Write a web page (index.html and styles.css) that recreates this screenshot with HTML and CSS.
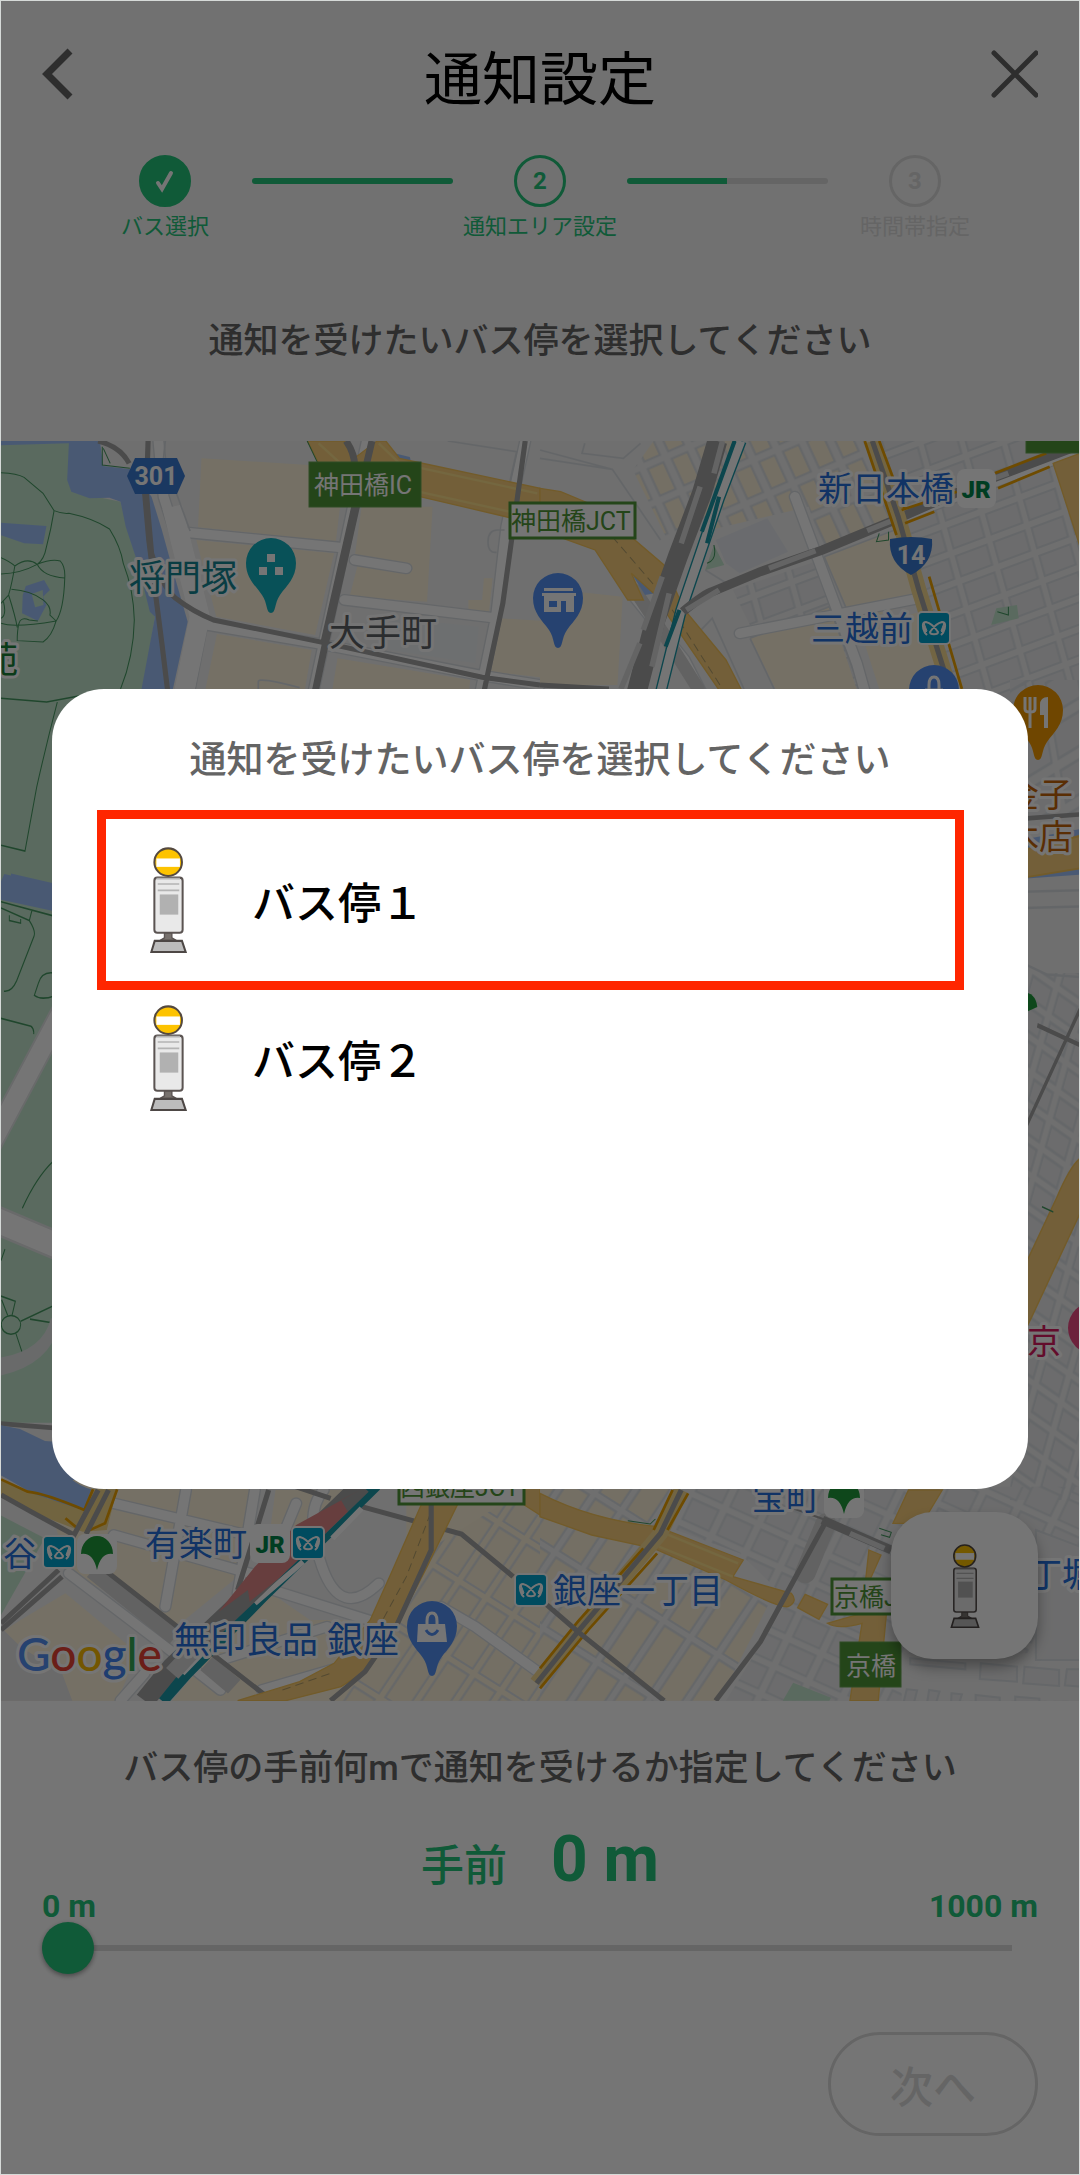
FILE: index.html
```html
<!DOCTYPE html>
<html lang="ja">
<head>
    <meta charset="utf-8">
    <meta name="viewport" content="width=device-width, initial-scale=1">
    <title>通知設定</title>
    <link rel="stylesheet" href="styles.css">
</head>
<body>
    <svg class="sprite">
        <symbol id="bus-stop" viewBox="61 56 110 315">
            <path d="M104 312h22v14l14 8H90l14-8z" fill="#77716d" stroke="#5b5452" stroke-width="4"/>
            <path d="M75 335h81l11 33H65z" fill="#bcbcbc" stroke="#4d4745" stroke-width="6"/>
            <rect x="74" y="147" width="84" height="164" rx="9" fill="#e9e9e9" stroke="#5b5452" stroke-width="6"/>
            <path d="M80 150h70M84 166h64M84 185h64" stroke="#b4b4b4" stroke-width="5"/>
            <path d="M90 197h55v60H90z" fill="#b1b1b1"/>
            <circle cx="115" cy="101" r="41" fill="#fdc300" stroke="#54493f" stroke-width="6"/>
            <path d="M80 90h70v25H80z" fill="#fff"/>
        </symbol>
        <symbol id="metro" viewBox="0 0 34 34">
            <rect x="1" y="1" width="32" height="32" rx="4" fill="#00a3cf" stroke="#fff" stroke-width="2"/>
            <path d="M10 24L8 22C5 16 5 11 9 11C14 12 17 15 21 21C21 24 13 24 13 21C17 15 20 12 25 11C29 11 29 16 26 22L24 24" fill="none" stroke="#fff" stroke-width="2"/>
            <path d="M7 12l3 8-2 2zM27 12l-3 8 2 2z" fill="#fff" stroke="#fff"/>
        </symbol>
        <symbol id="toei" viewBox="0 0 40 40">
            <rect width="40" height="40" rx="8" fill="#fff"/>
            <path d="M4 20A16 18 0 0 1 36 20Q24 18 20 36Q16 18 4 20z" fill="#1f9c3c"/>
        </symbol>
        <symbol id="pin" viewBox="-28 -28 56 80">
            <path d="M0 50C-5 50-3 41-9 32C-16 22-25 15-25 0A25 25 0 1 1 25 0C25 15 16 22 9 32C3 41 5 50 0 50z"/>
        </symbol>
        <pattern id="blocks-nihonbashi" width="118" height="86" patternUnits="userSpaceOnUse" patternTransform="rotate(-21) skewX(-6)">
            <path class="block" d="M12 12h96v62H12z"/>
        </pattern>
        <pattern id="blocks-kanda" width="76" height="112" patternUnits="userSpaceOnUse" patternTransform="rotate(-24)">
            <path class="block sand" d="M10 10h50v88H10z"/>
        </pattern>
        <pattern id="blocks-yaesu" width="84" height="60" patternUnits="userSpaceOnUse" patternTransform="rotate(24)">
            <path class="block" d="M10 8h62v42H10z"/>
        </pattern>
        <pattern id="blocks-ginza" width="94" height="210" patternUnits="userSpaceOnUse" patternTransform="rotate(33)">
            <path class="block sand" d="M10 10h72v188H10z"/>
        </pattern>
        <pattern id="blocks-kyobashi" width="110" height="92" patternUnits="userSpaceOnUse" patternTransform="rotate(25)">
            <path class="block" d="M10 10h84v68H10z"/>
        </pattern>
    </svg>

    <div class="screen">
        <header class="top-bar">
            <button class="icon-btn" aria-label="戻る">
                <svg width="32" height="52" viewBox="0 0 32 52"><path d="M28 3L5 26l23 23" stroke-width="7"/></svg>
            </button>
            <h1>通知設定</h1>
            <button class="icon-btn" aria-label="閉じる">
                <svg width="48" height="52" viewBox="0 0 48 52"><path d="M4 5l42 42M46 5L4 47" stroke-width="5" stroke-linecap="round"/></svg>
            </button>
        </header>

        <ol class="steps">
            <li class="step done">
                <span class="num"><svg width="24" height="26" viewBox="0 0 24 26"><path d="M5 15l4 6L18 5" fill="none" stroke="#fff" stroke-width="4" stroke-linecap="round"/></svg></span>
                <span class="label">バス選択</span>
            </li>
            <li class="bar full"></li>
            <li class="step current">
                <span class="num">2</span>
                <span class="label">通知エリア設定</span>
            </li>
            <li class="bar half"></li>
            <li class="step">
                <span class="num">3</span>
                <span class="label">時間帯指定</span>
            </li>
        </ol>

        <p class="lead">通知を受けたいバス停を選択してください</p>

        <div class="map">
            <svg class="map-canvas" viewBox="0 441 1080 1260" preserveAspectRatio="xMidYMid slice">
                <rect y="441" width="1080" height="1260" fill="#f1f1f1"/>

                <!-- Otemachi and the palace moat -->
                <g transform="translate(0 430) scale(.3444 .3333)">
                    <path class="park" d="M0 33H200L210 185 350 215 440 545 450 560 410 810H0z"/>
                    <path class="water" d="M0 33H290L300 108 380 118 440 200 470 300 510 450 545 575 495 810H405L450 560 435 545 400 400 365 290 350 215 318 203 260 205 207 185 195 150 200 40 0 46z"/>
                    <path class="water" d="M3 278L135 288 125 343 70 340 3 316zM75 468L128 450 145 480 125 500 135 525 110 573 64 550 66 495z"/>
                    <path class="park" d="M92 492l32-12 2 45-24 7z"/>
                    <path class="trail" d="M3 128Q50 130 70 142L125 190 157 242Q148 300 135 350 128 390 108 403M157 242Q180 252 200 250 270 265 318 297 350 350 358 400 388 480 390 570 388 680 350 777M3 383Q30 395 43 408M43 408Q80 380 108 403 125 440 188 444M108 403Q150 385 175 393 190 410 188 444 185 540 163 573 150 620 125 636L50 632Q50 600 55 580 60 560 85 570L110 573M3 432Q60 430 108 403M43 408Q35 460 25 495L3 520M33 478Q90 482 125 510 150 530 145 555L163 573M25 495Q45 560 50 592M3 580Q40 595 163 573M10 515q10 40-7 50"/>
                    <path class="sand" d="M585 85L895 105 1000 120 975 335 575 292zM570 330L970 370 915 615 628 560zM1050 230H1256L1240 515 1015 500 1040 400 1030 380zM630 612L905 660 880 810H590zM980 685L1365 750 1360 810H960zM1450 565L1568 572V742L1425 725zM1405 445h25l-10 100h-60v-35h40z"/>
                    <path d="M1110 560l280 30-10 110-250-40z" fill="#eef1f4"/>
                    <path class="casing" d="M460 33L475 200 590 570 545 810M550 308L985 352M600 585L920 640 1390 735 1568 765M1065 33L1000 350 940 640 905 810M1525 33L1470 290 1440 560 1390 810M1030 390L1180 415M1000 510L1430 563"/>
                    <path class="road" d="M460 33L475 200 590 570 545 810M550 308L985 352M600 585L920 640 1390 735 1568 765M1065 33L1000 350 940 640 905 810M1525 33L1470 290 1440 560 1390 810M1030 390L1180 415M1000 510L1430 563"/>
                    <path d="M500 230L580 560 530 810" fill="none" stroke="#fff" stroke-width="58" stroke-linejoin="round"/>
                    <path class="edge" d="M1300 33L1500 65 1460 250M1465 300h-20q-28 0-28 35t25 32M480 33l-5 50 77 220M750 810v-55q0-15 120 18"/>
                    <path class="water" d="M1130 66l60 15 8 35-45-10z"/>
                    <path class="highway" d="M893 33H1000L1035 80 1095 33H1120L1160 85 1250 105 1568 175V285L1460 258 1220 200 1100 130 930 110z"/>
                    <path class="highway-line" d="M925 40l90 85 200 60 353 80M1100 40l60 60 400 90"/>
                    <path class="subway" d="M430 33L425 190 440 370M420 190L432 330 455 520 470 640 490 810M440 370Q470 470 510 505 560 545 620 570L940 638 1400 742 1568 765M1525 33L1460 520 1400 810M285 33Q350 50 375 100"/>
                    <path class="subway wide" d="M1080 33L1035 230 945 640 910 810M1005 33Q1030 70 1030 110V230L940 640"/>
                    <path class="trail" d="M297 50v55l80 10M300 55l20 45M892 33l30 65"/>
                </g>

                <!-- Kanda to Mitsukoshimae -->
                <g transform="translate(540 430) scale(.3444 .3333)">
                    <path d="M330 33H960L1060 260 820 360 780 230 370 330 270 120z" fill="url(#blocks-kanda)"/>
                    <path d="M980 33H1568V810H1210L1060 270z" fill="url(#blocks-nihonbashi)"/>
                    <path d="M560 480L840 380 930 777H700z" fill="url(#blocks-nihonbashi)"/>
                    <path d="M510 330L660 265 720 365 580 430 540 400z" fill="#e6eaf0"/>
                    <path class="sand" d="M825 380L1030 300 1100 510 910 585zM610 625L840 530 930 810H700zM930 600L1120 540 1170 777 985 777zM60 480L240 500 225 765H0V490z"/>
                    <path class="edge" d="M0 85L210 118 350 330M210 118L0 60M130 40l-8 30 120 15 50-45M825 380L1030 300M610 625L840 530 930 777M610 625l70 152M825 380L910 585M480 420l70 45M430 640l70-75 100 230"/>
                    <path class="casing" d="M265 490L420 690 480 810M740 200L920 700 950 810M580 610L1100 505M1030 270L1568 60"/>
                    <path class="road" d="M265 490L420 690 480 810M740 200L920 700 950 810M580 610L1100 505M1030 270L1568 60"/>
                    <path d="M275 480L370 630 460 777" stroke="#d5d5d5" stroke-width="38" fill="none" stroke-linecap="round"/>
                    <path class="water" d="M265 430l70 60-30 5z"/>
                    <path class="highway" d="M0 175L60 185 160 228 360 405 420 540 540 690 600 810H540L380 570 330 490 265 430 300 510 255 510 160 360 0 300zM1490 100l78-30v280z"/>
                    <path class="lane" d="M210 320L360 500 470 680 530 777"/>
                    <path class="park" d="M505 345l30 60-55 15zM1325 535l60-10 5 40-80 20z"/>
                    <path class="trail" d="M505 345q10 45-20 55M985 310l-8 25 35-5V305M1328 545l32 10V530"/>
                    <path d="M583 33L520 205 410 540 345 810" fill="none" stroke="#1b98a8" stroke-width="34"/>
                    <path d="M583 33L520 205 410 540 345 810" fill="none" stroke="#fff" stroke-width="26"/>
                    <path d="M565 33L470 305M405 540L365 650M520 200L485 340" fill="none" stroke="#1b98a8" stroke-width="12"/>
                    <path d="M515 33L470 190 400 380 335 570 275 810" fill="none" stroke="#a3a3a3" stroke-width="58"/>
                    <path d="M530 33L505 130M465 170L410 340M355 440L300 600M375 490L325 710M290 640L235 777" fill="none" stroke="#d9dadb" stroke-width="16"/>
                    <path d="M415 545Q480 490 500 485L640 425 820 360 1030 270 1250 170 1568 45" fill="none" stroke="#a3a3a3" stroke-width="27"/>
                    <path d="M425 540L520 480M665 415L800 362M950 302L1040 265M1250 170l110-40" fill="none" stroke="#d9dadb" stroke-width="16"/>
                    <path class="toll" d="M965 33L1040 260 1100 480 1200 810"/>
                    <path class="toll-side" d="M943 33L1035 315M985 33L1060 240M1060 280L1145 245M1085 430L1165 700M1130 440L1225 777M1320 130L1470 70M1330 175L1480 110M1050 240L1210 185"/>
                    <path class="subway" d="M965 33L1040 260 1100 480 1200 810M0 765l200 12"/>
                </g>

                <!-- west side of the palace grounds -->
                <g transform="translate(0 680) scale(.3333 .523)">
                    <path class="park" d="M0 0H240V1420H0z"/>
                    <path class="water" d="M3 385l10-14 20 3V370L170 390V443L3 420z"/>
                    <path class="trail" d="M3 35L140 42 240 30M172 42Q140 120 110 205L75 327 3 316M3 424L160 451M3 436L88 460 96 440M28 450v10l34 5v-8M88 460q20 20 14 30L50 575q-15 22-38 20M160 560q-35-3-45 20L103 603q20 10 60 1M3 647l90 15q10 5 8 15M160 920Q110 950 67 1010M15 1088L3 1110M3 1178l43 10-10 27M5 1185l18 30M62 1226L165 1195M48 1250l29 56M90 1222l75 8"/>
                    <ellipse class="trail" cx="33" cy="1233" rx="29" ry="18"/>
                    <path d="M-20 880L180 640M-20 1030L180 1084M0 1325Q150 1310 180 1230" fill="none" stroke="#e4e6e8" stroke-width="58"/>
                    <path d="M-20 880L180 640M-20 1030L180 1084" fill="none" stroke="#fff" stroke-width="48"/>
                    <path d="M0 1330Q150 1310 180 1230L240 1400H0z" class="park"/>
                    <path d="M3 1422L160 1430" stroke="#a3a3a3" stroke-width="9"/>
                    <path class="water" d="M3 1425L60 1432 135 1455 240 1460V1568H130L3 1520z"/>
                </g>

                <!-- Yaesu -->
                <g transform="translate(960 680) scale(.3333 .523)">
                    <path d="M150 0H360V260H150z" fill="url(#blocks-nihonbashi)"/>
                    <path d="M190 560H360V1568H150z" fill="url(#blocks-yaesu)"/>
                    <path class="water" d="M190 305L360 285V372L190 380z"/>
                    <path class="highway" d="M190 325L360 298V360L190 378zM150 1180L290 990Q330 930 360 915V1020L215 1218 150 1300z"/>
                    <path class="edge" d="M190 405L360 402M190 436L360 433M200 545l60 18 100 5"/>
                    <path d="M190 265L360 257M232 660l128 38M150 920L360 630" fill="none" stroke="#a3a3a3" stroke-width="9"/>
                    <path class="trail" d="M246 1007l34 10"/>
                    <path d="M160 600q65-12 72 25L190 637z" fill="#1f9c3c"/>
                </g>

                <!-- Yurakucho and Ginza -->
                <g transform="translate(0 1460) scale(.3444 .3333)">
                    <path class="sand" d="M120 60H740L690 350 500 510 200 330zM800 90H1000L760 380 900 480H1180V60H1568V722H500L760 400zM60 480L190 400 400 580 340 722H0V520z"/>
                    <path d="M1150 330L1568 60V722H990z" fill="url(#blocks-ginza)"/>
                    <path d="M0 500L60 560 180 640 210 722H0z" fill="#e6e6e8"/>
                    <path class="park" d="M0 165L130 235 0 470z"/>
                    <path class="casing" d="M330 130L860 260M330 225L760 350M540 90L480 440M200 340L480 560 640 690M740 90L690 400M860 130L760 380 1100 490M760 690L1060 600M940 90Q880 160 935 320T1100 370M640 600L950 500M350 722L420 640M1568 640L1380 500 1280 440"/>
                    <path class="road" d="M330 130L860 260M330 225L760 350M540 90L480 440M200 340L480 560 640 690M740 90L690 400M860 130L760 380 1100 490M760 690L1060 600M940 90Q880 160 935 320T1100 370M640 600L950 500M350 722L420 640M1568 640L1380 500 1280 440"/>
                    <path class="water" d="M0 0H160Q200 70 265 88L245 150Q180 140 100 95L0 45z"/>
                    <path d="M0 60L80 95 245 152 270 88H340L310 210 240 215 100 160 0 105z" fill="#f6d98b"/>
                    <path class="toll-side" d="M3 58L80 95Q130 100 245 150L270 88M340 88L305 190 250 215M190 175l35 30"/>
                    <path class="subway" d="M3 105L90 155 215 225 285 90M250 222L315 90M3 490L170 330M3 510L180 350"/>
                    <path d="M270 330L510 530" stroke="#d5d5d5" stroke-width="55"/>
                    <path d="M600 610L680 680" stroke="#d5d5d5" stroke-width="55"/>
                    <path class="subway" d="M310 335L790 722M780 90L690 390M800 60L960 115M1050 140L1340 222 1490 350"/>
                    <path class="highway" d="M1225 130H1330L1240 320 1170 460 1060 635 990 680 830 722H690L870 665 970 610 1075 480 1140 330zM1440 80H1568V165z"/>
                    <path class="lane" d="M1250 160L1180 350 1090 520M820 690l140-50"/>
                    <path class="subway" d="M1252 130V270L1150 500 1060 635 960 722"/>
                    <path d="M1090 75L760 410 540 640 470 722" fill="none" stroke="#1b98a8" stroke-width="38"/>
                    <path d="M1050 145L965 235M880 305L740 430M610 555L530 640" fill="none" stroke="#fff" stroke-width="16"/>
                    <path d="M1050 75L720 405 500 620 420 722" fill="none" stroke="#a3a3a3" stroke-width="58"/>
                    <path d="M1045 90L860 195 740 320 635 455 720 390 725 425 810 355 1010 155 990 120z" fill="#e08787"/>
                    <path d="M590 540L500 640" stroke="#d9dadb" stroke-width="48"/>
                </g>

                <!-- Ginza-itchome and Kyobashi -->
                <g transform="translate(540 1460) scale(.3444 .3333)">
                    <path d="M0 80H380L320 230 0 640z" fill="url(#blocks-ginza)"/>
                    <path d="M120 520L320 240 680 400 520 722H0V660z" fill="url(#blocks-ginza)"/>
                    <path d="M420 80H1568V722H540L720 420 580 280 370 200z" fill="url(#blocks-kyobashi)"/>
                    <path d="M1050 580H1568V722H1050z" fill="#f1f1f1"/>
                    <path class="block" d="M1075 595l160 15v18l-160-15zM1280 610l105 10v45l-108-8zM1407 620l100 10v48l-104-8zM1530 628h38v52l-44-4zM1065 688l30 3-10 40h-30zM1130 690l30 5-12 40h-25zM1195 700l30 3-12 40h-20zM1265 705l70 8v20h-70zM1380 710l70 6v20h-70z"/>
                    <path d="M1440 210L1568 260V600H1440z" class="block"/>
                    <path class="highway" d="M0 100Q150 180 340 200L590 300 560 350 730 400Q750 425 720 440 690 445 540 360L330 265 150 225 0 170zM1070 90H1168L1110 190H1025zM955 270l35 15-30 70 5 60h45L982 722H900L935 490q-70 20-100 0l100-30zM770 403l65 30-25 45-62-35z"/>
                    <path class="highway-line" d="M350 215L575 310M345 260L560 350"/>
                    <path class="park" d="M735 668l110 45-5 9H705z"/>
                    <path class="trail" d="M255 182l65 10 15-15M985 205l35 12-5 15-25-8"/>
                    <path d="M770 340L830 190" stroke="#d5d5d5" stroke-width="60" stroke-linecap="round"/>
                    <path class="toll" d="M410 90L350 220 110 515-10 670"/>
                    <path class="toll-side" d="M385 90L330 210M430 100L370 210M300 265L110 485 0 625M340 280L140 510 0 685"/>
                    <path class="subway" d="M410 90L350 220 110 515-10 670M20 435L110 515 360 722M830 185L690 450 640 545 510 722"/>
                    <path d="M820 180L1020 270" stroke="#a3a3a3" stroke-width="26"/>
                    <path d="M900 220L1000 265" stroke="#d9dadb" stroke-width="16"/>
                    <path d="M720 140L830 180" stroke="#a3a3a3" stroke-width="6"/>
                </g>

                <!-- road signs -->
                <path d="M127 476l8-18h42l8 18-8 18h-42z" fill="#3a7ad3"/>
                <text class="route" x="156" y="485">301</text>
                <path d="M890 539q21-4 42 0 2 24-21 36-23-12-21-36z" fill="#3a7ad3"/>
                <text class="route" x="911" y="564">14</text>
                <rect class="exit" x="309" y="462" width="112" height="45"/>
                <text class="sign" x="314" y="494">神田橋IC</text>
                <rect class="junction" x="510" y="503" width="125" height="35"/>
                <text class="sign green" x="511" y="530">神田橋JCT</text>
                <rect class="junction" x="399" y="1468" width="125" height="36"/>
                <text class="sign green" x="400" y="1496">西銀座JCT</text>
                <rect class="junction" x="832" y="1579" width="125" height="35"/>
                <text class="sign green" x="834" y="1606">京橋JCT</text>
                <rect class="exit" x="840" y="1642" width="61" height="45"/>
                <text class="sign" x="846" y="1675">京橋</text>
                <rect class="exit" x="1026" y="430" width="60" height="23"/>

                <!-- stations -->
                <text class="place blue" x="818" y="501">新日本橋</text>
                <text class="place blue" x="811" y="641">三越前</text>
                <text class="place blue" x="145" y="1556">有楽町</text>
                <text class="place blue" x="3" y="1566">谷</text>
                <text class="place blue" x="553" y="1603">銀座一丁目</text>
                <text class="place blue" x="752" y="1510">宝町</text>
                <text class="place blue" x="994" y="1587">八丁堀</text>
                <rect x="957" y="469" width="39" height="39" rx="8" fill="#fff"/>
                <text class="jr" x="976" y="498">JR</text>
                <rect x="250" y="1524" width="40" height="39" rx="8" fill="#fff"/>
                <text class="jr" x="270" y="1553">JR</text>
                <use href="#metro" x="917" y="611" width="34" height="34"/>
                <use href="#metro" x="42" y="1535" width="34" height="34"/>
                <use href="#metro" x="291" y="1526" width="34" height="34"/>
                <use href="#metro" x="514" y="1573" width="34" height="34"/>
                <use href="#toei" x="77" y="1534" width="40" height="40"/>
                <use href="#toei" x="824" y="1478" width="40" height="40"/>

                <!-- places -->
                <text class="place teal large" x="129" y="591">将門塚</text>
                <text class="place gray large" x="329" y="646">大手町</text>
                <text class="place leaf large" x="-18" y="673">苑</text>
                <text class="place blue large" x="648" y="725">日本橋三越本店</text>
                <text class="place blue large" x="174" y="1653">無印良品 銀座</text>
                <text class="place orange" x="1005" y="807">金子</text>
                <text class="place orange" x="1005" y="849">木店</text>
                <text class="place pink" x="1027" y="1354">京</text>

                <use href="#pin" x="243" y="535" width="56" height="80" fill="#13b0c0"/>
                <path d="M267 554h8v8h-8zM259 567h8v8h-8zM275 567h8v8h-8z" fill="#fff"/>
                <use href="#pin" x="530" y="570" width="56" height="80" fill="#5491f5"/>
                <path d="M544 588h29v3h-29zM542 593h34v3h-2v16h-8v-11h-5v11h-17v-16h-2zM549 601v6h8v-6z" fill="#fff" fill-rule="evenodd"/>
                <use href="#pin" x="906" y="662" width="56" height="80" fill="#5491f5"/>
                <path d="M929 690v-5q0-8 5-8t5 8v5M925 690h18" fill="none" stroke="#fff" stroke-width="3"/>
                <use href="#pin" x="404" y="1598" width="56" height="80" fill="#5491f5"/>
                <path d="M418 1624h27l2 18h-30z" fill="#fff"/>
                <path d="M427 1624v-3q0-8 5-8t5 8v3" fill="none" stroke="#fff" stroke-width="3"/>
                <path d="M426 1630q6 9 12 0" fill="none" stroke="#5491f5" stroke-width="3"/>
                <use href="#pin" x="1010" y="682" width="56" height="80" fill="#f29900"/>
                <path d="M1025 697v12q0 3 5 3t5-3v-12M1030 697v31" fill="none" stroke="#fff" stroke-width="3"/>
                <path d="M1048 728h-4v-13h-4v-10q0-8 8-8z" fill="#fff"/>
                <circle cx="1094" cy="1328" r="26" fill="#ec4a83"/>

                <text class="google" x="17" y="1671"><tspan fill="#5491f5">G</tspan><tspan fill="#ea4335">o</tspan><tspan fill="#fbbc04">o</tspan><tspan fill="#4285f4">g</tspan><tspan fill="#34a853">l</tspan><tspan fill="#ea4335">e</tspan></text>
            </svg>
            <button class="fab" aria-label="バス停を選択">
                <svg width="30" height="84"><use href="#bus-stop"/></svg>
            </button>
        </div>

        <section class="distance">
            <p class="lead">バス停の手前何mで通知を受けるか指定してください</p>
            <div class="value"><label for="range">手前</label><output for="range">0 m</output></div>
            <div class="limits"><span>0 m</span><span>1000 m</span></div>
            <input type="range" id="range" min="0" max="1000" value="0">
            <button class="next-btn" disabled>次へ</button>
        </section>

        <div class="overlay">
            <div class="dialog" role="dialog" aria-labelledby="dialog-title">
                <h2 id="dialog-title">通知を受けたいバス停を選択してください</h2>
                <button class="stop selected">
                    <svg width="37" height="106"><use href="#bus-stop"/></svg>
                    <span>バス停１</span>
                </button>
                <button class="stop">
                    <svg width="37" height="106"><use href="#bus-stop"/></svg>
                    <span>バス停２</span>
                </button>
            </div>
        </div>
    </div>
</body>
</html>
```

FILE: styles.css
```css
* {
    box-sizing: border-box;
}
body {
    margin: 0;
    padding: 1px;
    background-color: #d6dad8;
    font-family: Roboto, "Noto Sans CJK JP", sans-serif;
    color: #646464;
}
h1, h2, p, ol {
    margin: 0;
    padding: 0;
}
button {
    font-family: inherit;
    background: none;
    border: none;
    padding: 0;
    cursor: pointer;
}
svg {
    display: block;
}
.sprite {
    position: absolute;
    width: 0;
    height: 0;
}
.screen {
    position: relative;
    display: flex;
    flex-direction: column;
    min-height: calc(100vh - 2px);
    background-color: #f6f6f6;
}

/* header */
.top-bar {
    display: flex;
    justify-content: space-between;
    align-items: center;
    height: 154px;
    padding: 0 41px;
}
.top-bar h1 {
    padding-top: 4px;
    color: #000;
    font-size: 58px;
    font-weight: 400;
    line-height: 80px;
}
.icon-btn {
    width: 48px;
    padding-bottom: 8px;
}
.icon-btn path {
    fill: none;
    stroke: #646464;
}

/* step indicator */
.steps {
    display: flex;
    gap: 9px;
    padding: 0 86px;
    list-style: none;
}
.step {
    display: flex;
    flex-direction: column;
    align-items: center;
    gap: 5px;
    width: 156px;
    color: #dcdcdc;
}
.step .num {
    display: flex;
    align-items: center;
    justify-content: center;
    width: 52px;
    height: 52px;
    border: 3px solid currentColor;
    border-radius: 50%;
    font-size: 24px;
    font-weight: 700;
}
.step .label {
    font-size: 22px;
    line-height: 30px;
    white-space: nowrap;
}
.step.done, .step.current {
    color: #24c47a;
}
.step.done .num {
    background-color: #24c47a;
}
.bar {
    flex: 1;
    height: 6px;
    margin-top: 23px;
    border-radius: 3px;
    background-color: #dcdcdc;
}
.bar.full {
    background-color: #24c47a;
}
.bar.half {
    background-image: linear-gradient(90deg, #24c47a 50%, #dcdcdc 50%);
}
.lead {
    font-size: 35px;
    font-weight: 500;
    line-height: 52px;
    text-align: center;
}
.steps + .lead {
    margin: 74px 0 73px;
}

/* map */
.map {
    position: relative;
    flex: 1 0 600px;
    overflow: hidden;
}
.map-canvas {
    position: absolute;
    inset: 0;
    width: 100%;
    height: 100%;
}
.park {
    fill: #c4e7cf;
}
.water {
    fill: #a0c3fa;
}
.sand {
    fill: #fff4dc;
}
.block {
    stroke: #dce0e4;
    stroke-width: 6;
    fill: #ececed;
}
.block.sand {
    fill: #fdf2da;
}
.trail {
    fill: none;
    stroke: #469a62;
    stroke-width: 3;
}
.casing, .road {
    fill: none;
    stroke-linejoin: round;
    stroke-linecap: round;
}
.casing {
    stroke: #dbdfe3;
    stroke-width: 36;
}
.road {
    stroke: #fff;
    stroke-width: 28;
}
.edge {
    fill: none;
    stroke: #dbdfe3;
    stroke-width: 5;
}
.highway {
    fill: #fbd07c;
    stroke: #f8c65c;
    stroke-width: 4;
}
.highway-line {
    fill: none;
    stroke: #fce08c;
    stroke-width: 7;
}
.lane {
    fill: none;
    stroke: #b5a06c;
    stroke-width: 3;
    stroke-dasharray: 25 15;
}
.subway {
    fill: none;
    stroke: #a3a3a3;
    stroke-width: 15;
}
.subway.wide {
    stroke-width: 20;
}
.toll {
    fill: none;
    stroke: #f8dc92;
    stroke-width: 44;
}
.toll-side {
    fill: none;
    stroke: #f0a400;
    stroke-width: 8;
}
.exit {
    fill: #4f9638;
    stroke: #67a550;
}
.junction {
    fill: #fff;
    stroke: #4f9638;
    stroke-width: 3;
}
.route {
    fill: #fff;
    font-size: 25px;
    font-weight: 700;
    text-anchor: middle;
}
.sign {
    fill: #fff;
    font-size: 25px;
}
.sign.green {
    fill: #4f9638;
}
.place, .google {
    paint-order: stroke;
    stroke: #fff;
    stroke-width: 6px;
    stroke-linejoin: round;
}
.place {
    font-size: 34px;
}
.large {
    font-size: 36px;
}
.blue {
    fill: #2570dc;
}
.teal {
    fill: #148693;
}
.gray {
    fill: #5f6368;
}
.leaf {
    fill: #188038;
}
.orange {
    fill: #c5640a;
}
.pink {
    fill: #d81b60;
}
.jr {
    fill: #00854a;
    font-size: 24px;
    font-weight: 900;
    text-anchor: middle;
}
.google {
    font-family: Lato, sans-serif;
    font-size: 46px;
    font-weight: 500;
}
.fab {
    position: absolute;
    right: 41px;
    bottom: 42px;
    display: flex;
    align-items: center;
    justify-content: center;
    width: 147px;
    height: 147px;
    border-radius: 42px;
    background-color: #fff;
    box-shadow: 0 8px 14px rgba(0, 0, 0, 0.35);
}

/* distance picker */
.distance {
    display: flex;
    flex-direction: column;
    padding: 42px 41px 38px;
    background-color: #fff;
}
.value {
    display: flex;
    justify-content: center;
    align-items: baseline;
    gap: 44px;
    height: 66px;
    margin-top: 29px;
    color: #24c47a;
    font-weight: 700;
    line-height: 72px;
}
.value label {
    padding-top: 3px;
    font-size: 43px;
    font-weight: 500;
}
.value output {
    font-size: 64px;
}
.limits {
    display: flex;
    justify-content: space-between;
    color: #24c47a;
    font-size: 32px;
    font-weight: 700;
    line-height: 32px;
}
#range {
    -webkit-appearance: none;
    appearance: none;
    width: 100%;
    height: 52px;
    margin: 0;
    background: linear-gradient(#dcdcdc, #dcdcdc) no-repeat left center / calc(100% - 26px) 6px;
}
#range::-webkit-slider-thumb {
    -webkit-appearance: none;
    width: 52px;
    height: 52px;
    border-radius: 50%;
    background-color: #24c47a;
    box-shadow: 0 2px 5px rgba(0, 0, 0, 0.4);
}
.next-btn {
    align-self: flex-end;
    width: 210px;
    height: 104px;
    margin-top: 58px;
    border: 3px solid #dcdcdc;
    border-radius: 52px;
    color: #dcdcdc;
    font-size: 43px;
    font-weight: 500;
}

/* stop selection */
.overlay {
    position: absolute;
    inset: 0;
    display: flex;
    align-items: center;
    padding: 2px 51px 0;
    background-color: rgba(0, 0, 0, 0.54);
}
.dialog {
    width: 100%;
    min-height: 800px;
    padding: 46px 75px 44px 56px;
    border-radius: 52px;
    background-color: #fff;
}
.dialog h2 {
    margin: 0 -75px 34px -56px;
    font-size: 37px;
    font-weight: 500;
    line-height: 52px;
    text-align: center;
}
.stop {
    display: flex;
    align-items: center;
    gap: 65px;
    width: 100%;
    height: 158px;
    padding-left: 42px;
    color: #000;
    font-size: 43px;
    font-weight: 500;
}
.stop.selected {
    outline: 9px solid #ff2600;
    outline-offset: 2px;
}
```
